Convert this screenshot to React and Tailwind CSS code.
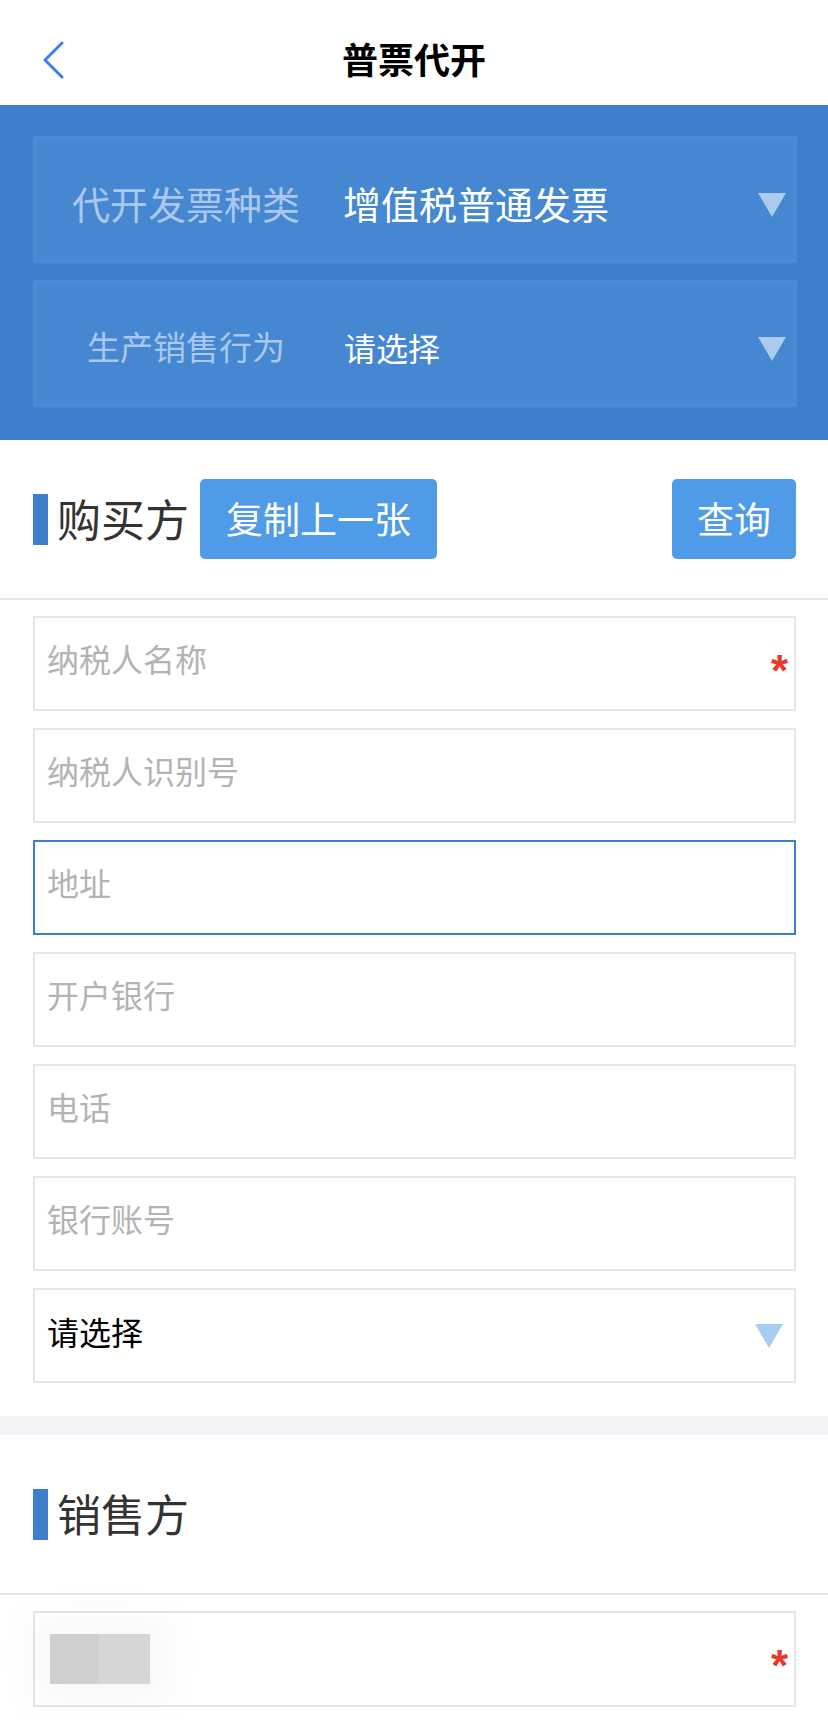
// 普票代开 — invoice request form

const BUYER_FIELDS = [
  { label: '纳税人名称', required: true },
  { label: '纳税人识别号' },
  { label: '地址', focused: true },
  { label: '开户银行' },
  { label: '电话' },
  { label: '银行账号' },
];

function Triangle({ color = '#abcbef' }) {
  return (
    <svg width="30" height="26" viewBox="0 0 30 26" className="shrink-0">
      <path d="M1 1 L29 1 L15 25 Z" fill={color} />
    </svg>
  );
}

function Asterisk() {
  return (
    <span className="ml-auto mr-[6px] translate-y-[7px] font-['Liberation_Sans',sans-serif] text-[44px] font-bold leading-none text-[#e8392b]">
      *
    </span>
  );
}

function SectionHeader({ title, children }) {
  return (
    <>
      <div className="flex h-[158px] items-center pl-[33px] pr-[32px]">
        <div className="h-[51px] w-[15px] bg-[#3d7fcc]" />
        <span className="ml-[9px] pb-[3px] text-[44px] leading-none text-[#333333]">{title}</span>
        {children}
      </div>
      <div className="h-[2px] bg-[#e6e6e6]" />
    </>
  );
}

function TextField({ label, required, focused }) {
  return (
    <div
      className={
        'flex h-[95px] items-center border-2 pl-[12px] ' +
        (focused ? 'border-[#3d7fcc]' : 'border-[#e6e6e6]')
      }
    >
      <input
        readOnly
        placeholder={label}
        className="min-w-0 flex-1 bg-transparent pb-[12px] text-[32px] leading-none text-[#333] outline-none placeholder:text-[#b3b3b3]"
      />
      {required && <Asterisk />}
    </div>
  );
}

export default function App() {
  return (
    <div className="min-h-[1720px] bg-white font-['Noto_Sans_CJK_SC',sans-serif]">
      {/* Top bar */}
      <div className="relative flex h-[105px] items-center justify-center pt-[11px]">
        <svg
          className="absolute left-[41px] top-[41px]"
          width="24"
          height="38"
          viewBox="0 0 24 38"
          fill="none"
        >
          <path
            d="M21 2 L4 19 L21 36"
            stroke="#3a7ef0"
            strokeWidth="3"
            strokeLinecap="round"
            strokeLinejoin="round"
          />
        </svg>
        <h1 className="text-[36px] font-bold leading-none text-black">普票代开</h1>
      </div>

      {/* Invoice type panel */}
      <div className="flex flex-col gap-[17px] bg-[#3e80cd] pb-[33px] pl-[33px] pr-[31px] pt-[31px]">
        <div className="flex h-[127px] items-center border-[4px] border-[#4b8bd3] bg-[#4587d0] pt-[6px]">
          <div className="w-[298px] text-center text-[38px] leading-none text-[#aac8ec]">代开发票种类</div>
          <div className="ml-[8px] text-[38px] leading-none text-white">增值税普通发票</div>
          <div className="ml-auto mr-[6px] pt-[4px]">
            <Triangle />
          </div>
        </div>
        <div className="flex h-[127px] items-center border-[4px] border-[#4b8bd3] bg-[#4587d0] pt-[6px]">
          <div className="w-[298px] text-center text-[33px] leading-none text-[#aac8ec]">生产销售行为</div>
          <div className="ml-[9px] text-[32px] leading-none text-white">请选择</div>
          <div className="ml-auto mr-[6px] pt-[4px]">
            <Triangle />
          </div>
        </div>
      </div>

      {/* Buyer */}
      <SectionHeader title="购买方">
        <button className="ml-[11px] flex h-[80px] w-[237px] items-center justify-center rounded-[5px] bg-[#4f9be8] pb-[2px] text-[37px] leading-none text-white">
          复制上一张
        </button>
        <button className="ml-auto flex h-[80px] w-[124px] items-center justify-center rounded-[5px] bg-[#4f9be8] pb-[2px] text-[37px] leading-none text-white">
          查询
        </button>
      </SectionHeader>

      <div className="flex flex-col gap-[17px] pb-[33px] pl-[33px] pr-[32px] pt-[16px]">
        {BUYER_FIELDS.map((f) => (
          <TextField key={f.label} {...f} />
        ))}
        <div className="flex h-[95px] items-center border-2 border-[#e6e6e6] pl-[12px] pr-[10px]">
          <span className="pb-[10px] text-[32px] leading-none text-black">请选择</span>
          <div className="ml-auto">
            <Triangle color="#a8cdf0" />
          </div>
        </div>
      </div>

      <div className="h-[19px] bg-[#f4f4f8]" />

      {/* Seller */}
      <SectionHeader title="销售方" />

      <div className="pl-[33px] pr-[32px] pt-[16px]">
        <div className="flex h-[96px] items-center border-2 border-[#e6e6e6] pl-[15px]">
          <div className="flex h-[50px] w-[100px] shadow-[0_0_40px_20px_rgba(0,0,0,0.03)]">
            <div className="w-[49px] bg-[#cfcfcf]" />
            <div className="flex-1 bg-[#d6d6d6]" />
          </div>
          <Asterisk />
        </div>
      </div>
    </div>
  );
}
